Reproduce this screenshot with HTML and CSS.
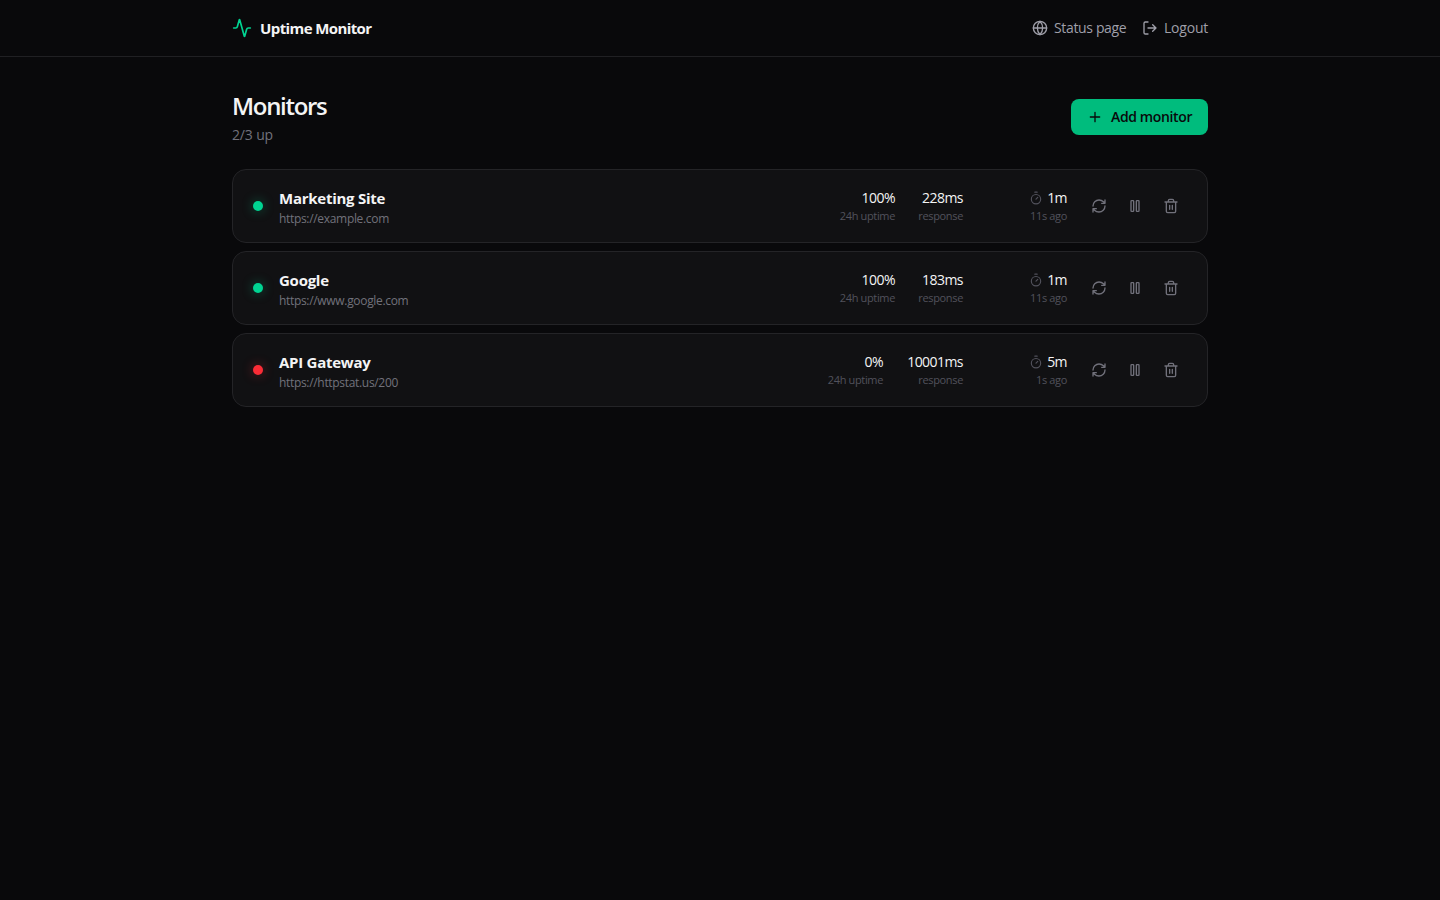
FILE: index.html
```html
<!DOCTYPE html>
<html lang="en">
<head>
<meta charset="utf-8">
<title>Uptime Monitor</title>
<link rel="stylesheet" href="styles.css">
</head>
<body>
<svg class="sprite" aria-hidden="true">
  <symbol id="activity" viewBox="0 0 24 24"><path d="M22 12h-2.48a2 2 0 0 0-1.93 1.46l-2.35 8.36a.25.25 0 0 1-.48 0L9.24 2.18a.25.25 0 0 0-.48 0l-2.35 8.36A2 2 0 0 1 4.49 12H2"/></symbol>
  <symbol id="globe" viewBox="0 0 24 24"><circle cx="12" cy="12" r="10"/><path d="M12 2a14.5 14.5 0 0 0 0 20 14.5 14.5 0 0 0 0-20M2 12h20"/></symbol>
  <symbol id="logout" viewBox="0 0 24 24"><path d="m16 17 5-5-5-5M21 12H9M9 21H5a2 2 0 0 1-2-2V5a2 2 0 0 1 2-2h4"/></symbol>
  <symbol id="plus" viewBox="0 0 24 24"><path d="M5 12h14M12 5v14"/></symbol>
  <symbol id="timer" viewBox="0 0 24 24"><path d="M10 2h4M12 14l3-3"/><circle cx="12" cy="14" r="8"/></symbol>
  <symbol id="refresh" viewBox="0 0 24 24"><path d="M3 12a9 9 0 0 1 9-9 9.75 9.75 0 0 1 6.74 2.74L21 8M21 3v5h-5M21 12a9 9 0 0 1-9 9 9.75 9.75 0 0 1-6.74-2.74L3 16M8 16H3v5"/></symbol>
  <symbol id="pause" viewBox="0 0 24 24"><rect x="14" y="4" width="4" height="16" rx="1"/><rect x="6" y="4" width="4" height="16" rx="1"/></symbol>
  <symbol id="trash" viewBox="0 0 24 24"><path d="M10 11v6M14 11v6M19 6v14a2 2 0 0 1-2 2H7a2 2 0 0 1-2-2V6M3 6h18M8 6V4a2 2 0 0 1 2-2h4a2 2 0 0 1 2 2v2"/></symbol>
</svg>
<header class="topbar">
  <div class="topbar-inner">
    <div class="brand"><svg class="icon icon-brand"><use href="#activity"/></svg><span class="brand-name">Uptime Monitor</span></div>
    <nav class="nav">
      <a class="nav-link"><svg class="icon"><use href="#globe"/></svg><span class="nav-status">Status page</span></a>
      <a class="nav-link"><svg class="icon"><use href="#logout"/></svg><span class="nav-logout">Logout</span></a>
    </nav>
  </div>
</header>
<main class="main">
  <div class="page-head">
    <div>
      <h1 class="title">Monitors</h1>
      <p class="summary">2/3 up</p>
    </div>
    <button class="add"><svg class="icon"><use href="#plus"/></svg><span>Add monitor</span></button>
  </div>
  <div class="list">
    <article class="card">
      <span class="dot dot-up"></span>
      <div class="info"><h2 class="name">Marketing Site</h2><p class="url">https://example.com</p></div>
      <div class="stats">
        <div class="stat stat-uptime"><p class="value">100%</p><p class="label">24h uptime</p></div>
        <div class="stat stat-response"><p class="value">228ms</p><p class="label">response</p></div>
        <div class="stat stat-interval"><p class="value interval"><svg class="icon icon-timer"><use href="#timer"/></svg>1m</p><p class="label">11s ago</p></div>
      </div>
      <div class="actions">
        <button class="action"><svg class="icon"><use href="#refresh"/></svg></button>
        <button class="action"><svg class="icon"><use href="#pause"/></svg></button>
        <button class="action"><svg class="icon"><use href="#trash"/></svg></button>
      </div>
    </article>
    <article class="card">
      <span class="dot dot-up"></span>
      <div class="info"><h2 class="name">Google</h2><p class="url">https://www.google.com</p></div>
      <div class="stats">
        <div class="stat stat-uptime"><p class="value">100%</p><p class="label">24h uptime</p></div>
        <div class="stat stat-response"><p class="value">183ms</p><p class="label">response</p></div>
        <div class="stat stat-interval"><p class="value interval"><svg class="icon icon-timer"><use href="#timer"/></svg>1m</p><p class="label">11s ago</p></div>
      </div>
      <div class="actions">
        <button class="action"><svg class="icon"><use href="#refresh"/></svg></button>
        <button class="action"><svg class="icon"><use href="#pause"/></svg></button>
        <button class="action"><svg class="icon"><use href="#trash"/></svg></button>
      </div>
    </article>
    <article class="card">
      <span class="dot dot-down"></span>
      <div class="info"><h2 class="name">API Gateway</h2><p class="url">https://httpstat.us/200</p></div>
      <div class="stats">
        <div class="stat stat-uptime"><p class="value">0%</p><p class="label">24h uptime</p></div>
        <div class="stat stat-response stat-wide"><p class="value">10001ms</p><p class="label">response</p></div>
        <div class="stat stat-interval"><p class="value interval"><svg class="icon icon-timer"><use href="#timer"/></svg>5m</p><p class="label">1s ago</p></div>
      </div>
      <div class="actions">
        <button class="action"><svg class="icon"><use href="#refresh"/></svg></button>
        <button class="action"><svg class="icon"><use href="#pause"/></svg></button>
        <button class="action"><svg class="icon"><use href="#trash"/></svg></button>
      </div>
    </article>
  </div>
</main>
</body>
</html>
```
FILE: styles.css
```css
* { box-sizing: border-box; margin: 0; padding: 0; }
body {
  min-height: 100vh;
  background: #09090b;
  color: #f4f4f5;
  font-family: "Segoe UI", "Open Sans", "Noto Sans", sans-serif;
  font-size: 14px;
  line-height: 20px;
  white-space: nowrap;
}
.sprite { display: none; }
.icon {
  display: block;
  flex: none;
  width: 16px;
  height: 16px;
  fill: none;
  stroke: currentColor;
  stroke-width: 2;
  stroke-linecap: round;
  stroke-linejoin: round;
}
button { border: 0; background: none; font: inherit; }
.topbar { border-bottom: 1px solid #202023; }
.topbar-inner {
  display: flex;
  align-items: center;
  justify-content: space-between;
  width: 976px;
  height: 56px;
  margin: 0 auto;
}
.brand { display: flex; align-items: center; gap: 8px; }
.icon-brand { width: 20px; height: 20px; color: #00d492; }
.brand-name { font-size: 15px; line-height: 24px; font-weight: 700; letter-spacing: -0.6px; }
.nav { display: flex; gap: 16px; color: #9f9fa9; }
.nav-link { display: flex; align-items: center; gap: 6px; }
.nav-status { width: 72px; letter-spacing: -0.35px; }
.nav-logout { width: 44px; letter-spacing: -0.2px; }
.main { width: 976px; margin: 0 auto; padding-top: 32px; }
.page-head {
  display: flex;
  align-items: center;
  justify-content: space-between;
  height: 56px;
  margin-bottom: 24px;
}
.title { padding-top: 1px; font-size: 24px; line-height: 32px; font-weight: 600; letter-spacing: -1.3px; }
.summary { margin-top: 3px; color: #71717b; letter-spacing: -0.15px; }
.add {
  display: flex;
  align-items: center;
  gap: 8px;
  width: 137px;
  height: 36px;
  padding: 0 16px;
  border-radius: 8px;
  background: #00bc7d;
  color: #09090b;
  font-weight: 600;
  letter-spacing: -0.37px;
}
.list { display: flex; flex-direction: column; gap: 8px; }
.card {
  display: flex;
  align-items: center;
  height: 74px;
  padding: 0 20px;
  border: 1px solid #242427;
  border-radius: 14px;
  background: #111113;
}
.dot { flex: none; width: 10px; height: 10px; margin-right: 16px; border-radius: 50%; }
.dot-up { background: #00d492; box-shadow: 0 0 12px rgba(0, 212, 146, .4); }
.dot-down { background: #fb2c36; box-shadow: 0 0 12px rgba(251, 44, 54, .4); }
.info { flex: 1; }
.name { font-size: 15px; line-height: 24px; font-weight: 700; letter-spacing: -0.26px; }
.url { margin-top: 1px; color: #71717b; font-size: 12px; line-height: 16px; letter-spacing: -0.32px; }
.stats { display: flex; gap: 24px; }
.stat { display: flex; flex-direction: column; align-items: flex-end; }
.stat-uptime { width: 56px; }
.stat-response { width: 44px; }
.stat-wide { width: 56px; }
.stat-interval { width: 80px; }
.value { font-weight: 500; letter-spacing: -0.55px; }
.interval { display: flex; align-items: center; gap: 4px; }
.icon-timer { width: 14px; height: 14px; color: #52525c; }
.label { color: #52525c; font-size: 11px; line-height: 16px; letter-spacing: -0.35px; }
.actions { display: flex; gap: 4px; margin-left: 16px; }
.action { display: grid; place-items: center; width: 32px; height: 32px; color: #71717b; }
```
